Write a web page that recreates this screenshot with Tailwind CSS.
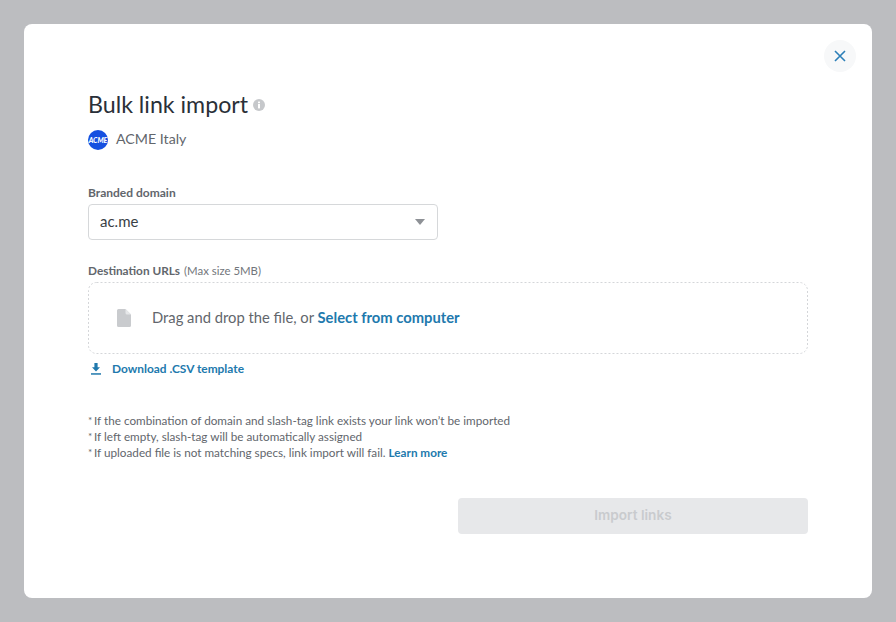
<!DOCTYPE html>
<html>
<head>
<meta charset="utf-8">
<script src="https://cdn.jsdelivr.net/npm/@tailwindcss/browser@4"></script>
</head>
<body class="m-0">
<div class="w-[896px] h-[622px] bg-[#bcbdc0] p-6 overflow-hidden font-['Lato','Liberation_Sans',sans-serif]">
  <div class="relative w-[848px] h-[574px] bg-white rounded-[8px] pt-[65px] px-16">
    <button class="absolute top-[16px] right-[16px] w-8 h-8 rounded-full bg-[#f7f8f9] flex items-center justify-center">
      <svg width="12" height="12" viewBox="0 0 12 12" fill="none" stroke="#2b7fb8" stroke-width="1.6"><path d="M1 1L11 11M11 1L1 11"/></svg>
    </button>
    <div class="flex items-center h-[30px]">
      <h1 class="text-[23.2px] leading-[30px] text-[#2a3038] font-normal">Bulk link import</h1>
      <svg class="ml-[5px] mt-[1px]" width="12" height="12" viewBox="0 0 12 12"><circle cx="6" cy="6" r="6" fill="#c6c8cb"/><rect x="5" y="5" width="2" height="4.4" fill="#fff"/><rect x="5" y="2.6" width="2" height="1.6" fill="#fff"/></svg>
    </div>
    <div class="flex items-center mt-[10px] h-[20px]">
      <div class="w-5 h-5 mt-[2px] rounded-full bg-[#1650e0] flex items-center justify-center text-white text-[7px] font-black italic leading-none">ACME</div>
      <span class="ml-2 text-[14.2px] leading-5 text-[#62666c]">ACME Italy</span>
    </div>
    <div class="mt-[36px] text-[12px] leading-4 font-bold text-[#62666c]">Branded domain</div>
    <div class="mt-[3px] w-[350px] h-9 border border-[#d6d8da] rounded-[4px] flex items-center justify-between pl-[11px] pr-[12px]">
      <span class="text-[15px] text-[#3a3f46] leading-5 pb-[2px]">ac.me</span>
      <svg width="10" height="6" viewBox="0 0 10 6"><path d="M0 0H10L5 6Z" fill="#8e9196"/></svg>
    </div>
    <div class="mt-[23px] text-[11.8px] leading-4"><span class="font-bold text-[#62666c]">Destination URLs</span> <span class="text-[11.4px] text-[#72767b] ml-[1px]">(Max size 5MB)</span></div>
    <div class="relative mt-[3px] h-[72px] rounded-[8px] flex items-center pl-[29px]">
      <svg class="absolute inset-0" width="720" height="72" fill="none"><rect x="0.5" y="0.5" width="719" height="71" rx="8" stroke="#d4d6d9" stroke-dasharray="2 2"/></svg>
      <svg width="14" height="18" viewBox="0 0 14 18"><path d="M1.5 0H8.5L14 5.5V16.5A1.5 1.5 0 0 1 12.5 18H1.5A1.5 1.5 0 0 1 0 16.5V1.5A1.5 1.5 0 0 1 1.5 0Z" fill="#c9cbce"/><path d="M8.5 0V4A1.5 1.5 0 0 0 10 5.5H14Z" fill="#e6e7e9"/></svg>
      <span class="ml-[21px] text-[14.75px] leading-5 text-[#62666c] pb-[2px]">Drag and drop the file, or <span class="font-bold text-[#2179ad]">Select from computer</span></span>
    </div>
    <div class="flex items-center mt-[7px] h-4 pl-[2px]">
      <svg width="12" height="12" viewBox="0 0 12 12" fill="#2179ad"><path d="M4.4 0H7.6V4.2H10L6 8.4L2 4.2H4.4Z"/><rect x="1" y="10.2" width="10" height="1.5"/></svg>
      <span class="ml-[10px] text-[11.9px] leading-4 font-bold text-[#2179ad]">Download .CSV template</span>
    </div>
    <div class="mt-[35px] text-[11.72px] leading-4 text-[#62666c]">
      <div class="flex"><span class="w-[6px] text-[10px]">*</span><p>If the combination of domain and slash-tag link exists your link won’t be imported</p></div>
      <div class="flex"><span class="w-[6px] text-[10px]">*</span><p>If left empty, slash-tag will be automatically assigned</p></div>
      <div class="flex"><span class="w-[6px] text-[10px]">*</span><p>If uploaded file is not matching specs, link import will fail. <span class="font-bold text-[#2179ad]">Learn more</span></p></div>
    </div>
    <div class="flex justify-end mt-[38px]">
      <button class="w-[350px] h-9 rounded-[4px] bg-[#e7e8ea] text-[13.6px] font-semibold text-[#c9cbce] font-['Inter',sans-serif] pb-[2px]">Import links</button>
    </div>
  </div>
</div>
</body>
</html>
